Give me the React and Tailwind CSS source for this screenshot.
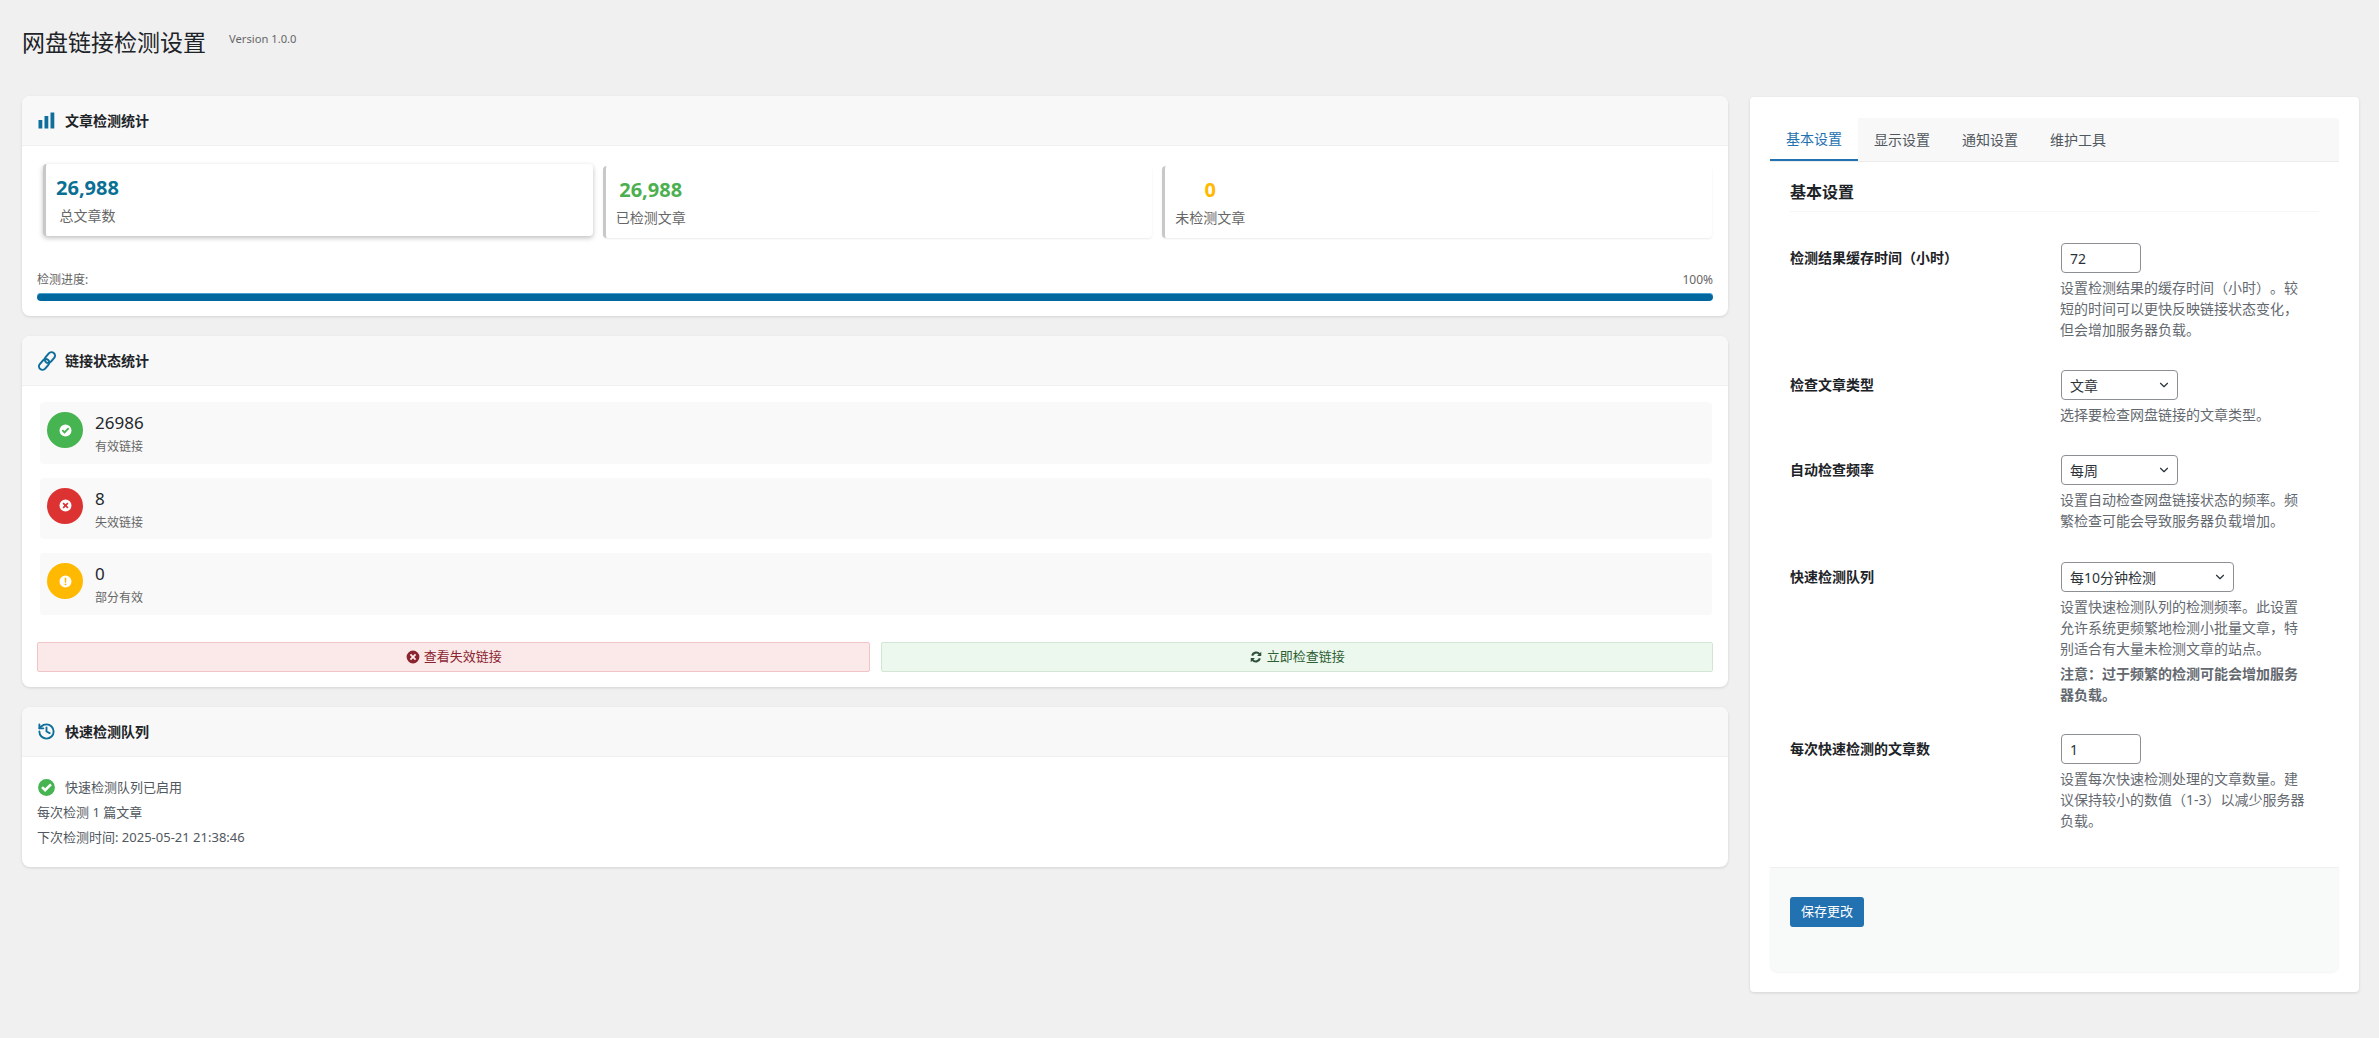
import React from "react";
import { ChevronDown, History } from "lucide-react";

const FONT = '"Noto Sans","Noto Sans CJK SC",sans-serif';

function YesAlt({ className }) {
  return (
    <svg viewBox="0 0 20 20" className={className} fill="currentColor">
      <path fillRule="evenodd" d="M10 2a8 8 0 1 0 0 16 8 8 0 0 0 0-16zm-1.3 12.2L4.9 10.4l1.7-1.7 2.1 2.1 4.7-4.7 1.7 1.7-6.4 6.4z" />
    </svg>
  );
}
function NoAlt({ className }) {
  return (
    <svg viewBox="0 0 20 20" className={className} fill="currentColor">
      <path fillRule="evenodd" d="M10 2a8 8 0 1 0 0 16 8 8 0 0 0 0-16zm4 10.400L12.400 14 10 11.600 7.600 14 6 12.400 8.400 10 6 7.600 7.600 6 10 8.400 12.400 6 14 7.600 11.600 10 14 12.400z" />
    </svg>
  );
}
function Warn({ className }) {
  return (
    <svg viewBox="0 0 20 20" className={className} fill="currentColor">
      <path fillRule="evenodd" d="M10 2a8 8 0 1 0 0 16 8 8 0 0 0 0-16zM8.800 5h2.400l-.4 6.500H9.200L8.800 5zM10 12.500a1.300 1.300 0 1 1 0 2.600 1.300 1.300 0 0 1 0-2.600z" />
    </svg>
  );
}
function Update({ className }) {
  return (
    <svg viewBox="0 0 20 20" className={className} fill="none" stroke="currentColor" strokeWidth="3">
      <path d="M4.500 8a6 6 0 0 1 10.500-2" />
      <path d="M15.500 12a6 6 0 0 1-10.500 2" />
      <path d="M17.500 2.500v6h-6z" fill="currentColor" stroke="none" />
      <path d="M2.500 17.500v-6h6z" fill="currentColor" stroke="none" />
    </svg>
  );
}
function Bars({ className }) {
  return (
    <svg viewBox="0 0 17 17" className={className} fill="currentColor">
      <rect x="0.500" y="8" width="3.800" height="8.500" />
      <rect x="6.500" y="4" width="3.800" height="12.500" />
      <rect x="12.500" y="0.500" width="3.800" height="16" />
    </svg>
  );
}
function ChainIcon({ className }) {
  return (
    <svg viewBox="0 0 20 20" className={className} fill="none" stroke="currentColor" strokeWidth="2">
      <g transform="rotate(-50 10 10)">
        <rect x="-0.500" y="6.500" width="12" height="7" rx="3.500" />
        <rect x="8.500" y="6.500" width="12" height="7" rx="3.500" />
      </g>
    </svg>
  );
}

function Card({ icon, title, children, bodyClass }) {
  return (
    <section className="mb-[20px] overflow-hidden rounded-[8px] bg-white shadow-[0_1px_3px_rgba(0,0,0,0.12)]">
      <header className="flex h-[50px] items-center gap-[10px] border-b border-[#f0f0f0] bg-[#f8f8f8] pl-[16px]">
        <span className="flex h-[17px] w-[17px] items-center justify-center text-[#0f6f9c]">{icon}</span>
        <h2 className="text-[14px] font-bold leading-none text-[#1d2327]">{title}</h2>
      </header>
      <div className={bodyClass}>{children}</div>
    </section>
  );
}

function Stat({ value, label, color, raised }) {
  return (
    <div className={raised
      ? "flex h-[72px] flex-1 -translate-y-[2px] flex-col items-start rounded-[4px] border-l-[3px] border-[#c8c8c8] bg-white pl-[10px] shadow-[0_2px_5px_rgba(0,0,0,0.25)]"
      : "flex h-[72px] flex-1 flex-col items-start rounded-[4px] border-l-[3px] border-[#c8c8c8] bg-white pl-[10px] shadow-[0_1px_2px_rgba(0,0,0,0.08)]"}>
      <div className="flex flex-col items-center">
        <div className={`mt-[9px] text-[20px] font-bold leading-[30px] ${color}`}>{value}</div>
        <div className="mt-[1px] text-[14px] leading-[24px] text-[#666666]">{label}</div>
      </div>
    </div>
  );
}

function LinkRow({ value, label, bg, glyph }) {
  return (
    <div className="flex h-[61.5px] items-start rounded-[4px] bg-[#f9f9f9] pl-[7px]">
      <div className={`mt-[10px] flex h-[36px] w-[36px] items-center justify-center rounded-full text-white ${bg}`}>{glyph}</div>
      <div className="ml-[12px] mt-[9px]">
        <div className="text-[17px] leading-[24px] text-[#23282d]">{value}</div>
        <div className="mt-[1px] text-[12px] leading-[22px] text-[#666666]">{label}</div>
      </div>
    </div>
  );
}

function Row({ label, control, children, className }) {
  return (
    <div className={`flex ${className}`}>
      <div className="w-[271px] shrink-0 pt-[4px] text-[14px] font-bold leading-[21px] text-[#1d2327]">{label}</div>
      <div className="flex-1">
        <div className="mb-[4px]">{control}</div>
        {children}
      </div>
    </div>
  );
}

function Desc({ children, className }) {
  return <p className={`-ml-[1px] text-[14px] leading-[21px] text-[#646970] [text-spacing-trim:space-all] ${className || ""}`}>{children}</p>;
}

function NumInput({ value }) {
  return (
    <div className="flex h-[30px] w-[80px] items-center rounded-[4px] border border-[#8c8f94] bg-white pl-[8px] text-[14px] text-[#2c3338]">{value}</div>
  );
}

function SelectBox({ value, width }) {
  return (
    <div className={`flex h-[30px] items-center justify-between rounded-[4px] border border-[#8c8f94] bg-white pl-[8px] pr-[6px] text-[14px] text-[#2c3338] ${width}`}>
      <span>{value}</span>
      <ChevronDown size={14} strokeWidth={2} className="text-[#2c3338]" />
    </div>
  );
}

export default function App() {
  return (
    <div className="min-h-screen bg-[#f0f0f1] pl-[22px] pr-[20px]" style={{ fontFamily: FONT }}>
      <div className="flex h-[96px] items-start pt-[25px]">
        <h1 className="text-[23px] font-normal leading-[34px] text-[#1d2327]">网盘链接检测设置</h1>
        <span className="ml-[23px] mt-[5px] text-[11.2px] leading-[18px] text-[#666666]">Version 1.0.0</span>
      </div>

      <div className="flex items-start gap-[22px]">
        <main className="w-[1706px] shrink-0">
          <Card icon={<Bars className="h-[17px] w-[17px]" />} title="文章检测统计" bodyClass="px-[15px] pt-[20px] pb-[15px]">
            <div className="flex gap-[10px] pl-[6px] pr-[1px]">
              <Stat raised value="26,988" label="总文章数" color="text-[#0a6f94]" />
              <Stat value="26,988" label="已检测文章" color="text-[#4caf50]" />
              <Stat value="0" label="未检测文章" color="text-[#ffb900]" />
            </div>
            <div className="mt-[33px] flex justify-between text-[12px] leading-[18px] text-[#666666]">
              <span>检测进度:</span>
              <span>100%</span>
            </div>
            <div className="mt-[4px] h-[8px] rounded-full bg-[#00689f] shadow-[inset_0_1px_0_rgba(120,200,240,0.6)]"></div>
          </Card>

          <Card icon={<ChainIcon className="h-[20px] w-[20px] shrink-0" />} title="链接状态统计" bodyClass="px-[15px] pt-[16px] pb-[15px]">
            <div className="flex flex-col gap-[14px] pl-[3px] pr-[1px]">
              <LinkRow value="26986" label="有效链接" bg="bg-[#46b450]" glyph={<YesAlt className="h-[15px] w-[15px]" />} />
              <LinkRow value="8" label="失效链接" bg="bg-[#dc3232]" glyph={<NoAlt className="h-[15px] w-[15px]" />} />
              <LinkRow value="0" label="部分有效" bg="bg-[#ffb900]" glyph={<Warn className="h-[15px] w-[15px]" />} />
            </div>
            <div className="mt-[27.5px] flex gap-[11px]">
              <button className="flex h-[30px] flex-1 items-center justify-center gap-[3px] rounded-[2px] border border-[#f1c4c8] bg-[#fbe9ea] text-[13px] text-[#8a2530]">
                <NoAlt className="h-[16px] w-[16px]" />查看失效链接
              </button>
              <button className="flex h-[30px] flex-1 items-center justify-center gap-[4px] rounded-[2px] border border-[#d3e6d5] bg-[#ecf7ed] text-[13px] text-[#2c5e33]">
                <Update className="h-[14px] w-[14px] text-[#2f4f3a]" />立即检查链接
              </button>
            </div>
          </Card>

          <Card icon={<History size={19} strokeWidth={2.4} className="shrink-0" />} title="快速检测队列" bodyClass="px-[15px] pt-[18px] pb-[17px]">
            <div className="flex h-[25px] items-center gap-[8px] text-[13px] text-[#50575e]">
              <YesAlt className="-ml-[1px] h-[21px] w-[21px] text-[#46b450]" />
              <span>快速检测队列已启用</span>
            </div>
            <div className="text-[13px] leading-[25px] text-[#50575e]">每次检测 1 篇文章</div>
            <div className="text-[13px] leading-[25px] text-[#50575e]">下次检测时间: 2025-05-21 21:38:46</div>
          </Card>
        </main>

        <aside className="mt-[1px] w-[609px] shrink-0 rounded-[4px] bg-white px-[20px] pt-[21px] pb-[20px] shadow-[0_1px_3px_rgba(0,0,0,0.12)]">
          <nav className="flex h-[44px] rounded-t-[4px] border-b border-[#ececec] bg-[#f8f8f8] text-[14px]">
            <span className="flex w-[88px] items-center justify-center border-b-2 border-[#2271b1] bg-white text-[#2271b1]">基本设置</span>
            <span className="flex w-[88px] items-center justify-center text-[#50575e]">显示设置</span>
            <span className="flex w-[88px] items-center justify-center text-[#50575e]">通知设置</span>
            <span className="flex w-[88px] items-center justify-center text-[#50575e]">维护工具</span>
          </nav>
          <div className="px-[20px] pb-[36px]">
            <h3 className="flex h-[50px] items-center border-b border-[#f6f6f6] pt-[10px] text-[16px] font-bold text-[#1d2327]">基本设置</h3>
            <Row className="mt-[31px]" label="检测结果缓存时间（小时）" control={<NumInput value="72" />}>
              <Desc>设置检测结果的缓存时间（小时）。较<br />短的时间可以更快反映链接状态变化，<br />但会增加服务器负载。</Desc>
            </Row>
            <Row className="mt-[30px]" label="检查文章类型" control={<SelectBox value="文章" width="w-[117px]" />}>
              <Desc>选择要检查网盘链接的文章类型。</Desc>
            </Row>
            <Row className="mt-[30px]" label="自动检查频率" control={<SelectBox value="每周" width="w-[117px]" />}>
              <Desc>设置自动检查网盘链接状态的频率。频<br />繁检查可能会导致服务器负载增加。</Desc>
            </Row>
            <Row className="mt-[31px]" label="快速检测队列" control={<SelectBox value="每10分钟检测" width="w-[173px]" />}>
              <Desc>设置快速检测队列的检测频率。此设置<br />允许系统更频繁地检测小批量文章，特<br />别适合有大量未检测文章的站点。</Desc>
              <Desc className="mt-[4px] font-bold">注意：过于频繁的检测可能会增加服务<br />器负载。</Desc>
            </Row>
            <Row className="mt-[29px]" label="每次快速检测的文章数" control={<NumInput value="1" />}>
              <Desc>设置每次快速检测处理的文章数量。建<br />议保持较小的数值（1-3）以减少服务器<br />负载。</Desc>
            </Row>
          </div>
          <div className="h-[105px] rounded-b-[8px] border-t border-[#f0f0f0] bg-[#f8f9f9] pl-[20px] pt-[29px] shadow-[0_1px_2px_rgba(0,0,0,0.05)]">
            <button className="flex h-[30px] w-[74px] items-center justify-center rounded-[3px] bg-[#2271b1] text-[13px] text-white">保存更改</button>
          </div>
        </aside>
      </div>
    </div>
  );
}
